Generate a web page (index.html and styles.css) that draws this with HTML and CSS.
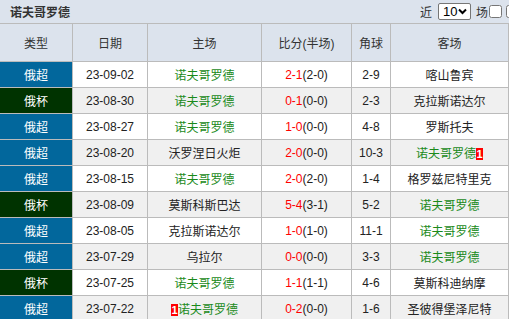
FILE: index.html
```html
<!DOCTYPE html>
<html>
<head>
<meta charset="utf-8">
<link rel="stylesheet" href="styles.css">
</head>
<body>
<div class="page">
  <div class="bar">
    <span class="title">诺夫哥罗德</span>
    <div class="tools">
      <span>近</span>
      <span class="sel"><span class="selv">10</span><svg class="chev" width="9" height="7" viewBox="0 0 9 7"><path d="M1 1.5 L4.5 5 L8 1.5" fill="none" stroke="#000" stroke-width="2"/></svg></span>
      <span>场</span>
      <input type="checkbox" class="chk">
      <input type="checkbox" class="chk">
    </div>
  </div>
  <table class="tbl">
    <colgroup>
      <col class="c1"><col class="c2"><col class="c3"><col class="c4"><col class="c5"><col class="c6">
    </colgroup>
    <thead>
      <tr class="head"><th>类型</th><th>日期</th><th>主场</th><th>比分(半场)</th><th>角球</th><th>客场</th></tr>
    </thead>
    <tbody>
      <tr><td class="lg prem">俄超</td><td>23-09-02</td><td class="me">诺夫哥罗德</td><td><span class="ft">2-1</span>(2-0)</td><td>2-9</td><td>喀山鲁宾</td></tr>
      <tr class="alt"><td class="lg cup">俄杯</td><td>23-08-30</td><td class="me">诺夫哥罗德</td><td><span class="ft">0-1</span>(0-0)</td><td>2-3</td><td>克拉斯诺达尔</td></tr>
      <tr><td class="lg prem">俄超</td><td>23-08-27</td><td class="me">诺夫哥罗德</td><td><span class="ft">1-0</span>(0-0)</td><td>4-8</td><td>罗斯托夫</td></tr>
      <tr class="alt"><td class="lg prem">俄超</td><td>23-08-20</td><td>沃罗涅日火炬</td><td><span class="ft">2-0</span>(0-0)</td><td>10-3</td><td class="me">诺夫哥罗德<span class="card">1</span></td></tr>
      <tr><td class="lg prem">俄超</td><td>23-08-15</td><td class="me">诺夫哥罗德</td><td><span class="ft">2-0</span>(2-0)</td><td>1-4</td><td>格罗兹尼特里克</td></tr>
      <tr class="alt"><td class="lg cup">俄杯</td><td>23-08-09</td><td>莫斯科斯巴达</td><td><span class="ft">5-4</span>(3-1)</td><td>5-2</td><td class="me">诺夫哥罗德</td></tr>
      <tr><td class="lg prem">俄超</td><td>23-08-05</td><td>克拉斯诺达尔</td><td><span class="ft">1-0</span>(1-0)</td><td>11-1</td><td class="me">诺夫哥罗德</td></tr>
      <tr class="alt"><td class="lg prem">俄超</td><td>23-07-29</td><td>乌拉尔</td><td><span class="ft">0-0</span>(0-0)</td><td>3-3</td><td class="me">诺夫哥罗德</td></tr>
      <tr><td class="lg cup">俄杯</td><td>23-07-25</td><td class="me">诺夫哥罗德</td><td><span class="ft">1-1</span>(1-1)</td><td>4-6</td><td>莫斯科迪纳摩</td></tr>
      <tr class="alt"><td class="lg prem">俄超</td><td>23-07-22</td><td class="me"><span class="card">1</span>诺夫哥罗德</td><td><span class="ft">0-2</span>(0-0)</td><td>1-6</td><td>圣彼得堡泽尼特</td></tr>
    </tbody>
  </table>
</div>
</body>
</html>
```
FILE: styles.css
```css
html, body {
  margin: 0;
  padding: 0;
  background: #ffffff;
}
body {
  font-family: "Liberation Sans", Arial, "Noto Sans CJK SC", sans-serif;
  font-size: 12px;
  color: #333;
  overflow: hidden;
}
.page {
  width: 509px;
  overflow: hidden;
}
.bar {
  height: 23px;
  background: #dce3ed;
  display: flex;
  align-items: center;
  justify-content: space-between;
  white-space: nowrap;
}
.title {
  font-weight: bold;
  font-size: 12px;
  padding-left: 10px;
  color: #333;
}
.tools {
  display: flex;
  align-items: center;
  margin-right: -13px;
  font-size: 12px;
  color: #333;
}
.sel {
  box-sizing: border-box;
  display: inline-flex;
  align-items: center;
  justify-content: space-between;
  width: 33px;
  height: 17px;
  margin: 0 5px 0 6px;
  padding: 0 3px 0 4px;
  border: 1px solid #767676;
  border-radius: 2px;
  background: #fff;
  color: #000;
  font-size: 13px;
}
.selv { line-height: 15px; }
.chev { display: block; }
.chk {
  width: 13px;
  height: 13px;
  margin: 0 3px 1px 1px;
}
.tbl {
  width: 509px;
  table-layout: fixed;
  border-collapse: separate;
  border-spacing: 0;
  border-top: 1px solid #bbb;
}
.c1 { width: 73px; }
.c2 { width: 75px; }
.c3 { width: 114px; }
.c4 { width: 90px; }
.c5 { width: 39px; }
.c6 { width: 118px; }
.tbl th, .tbl td {
  border-right: 1px solid #bbb;
  border-bottom: 1px solid #bbb;
  padding: 0;
  text-align: center;
  white-space: nowrap;
  overflow: hidden;
}
.tbl th {
  background: #dce3ed;
  font-weight: normal;
  color: #333;
}
.head { height: 38px; }
.tbl tbody tr { height: 26px; background: #fff; }
.tbl tbody tr.alt { background: #f0f0f0; }
.tbl td { color: #222; }
.tbl td.lg { color: #fff; }
.tbl td.prem { background: #02679c; }
.tbl td.cup { background: #003300; }
.tbl td.me { color: #1a8a1a; }
.ft { color: #f00; }
.card {
  display: inline-block;
  background: #f00;
  color: #fff;
  font-weight: bold;
  font-size: 11px;
  line-height: 12px;
  width: 7px;
  text-align: center;
}
```
